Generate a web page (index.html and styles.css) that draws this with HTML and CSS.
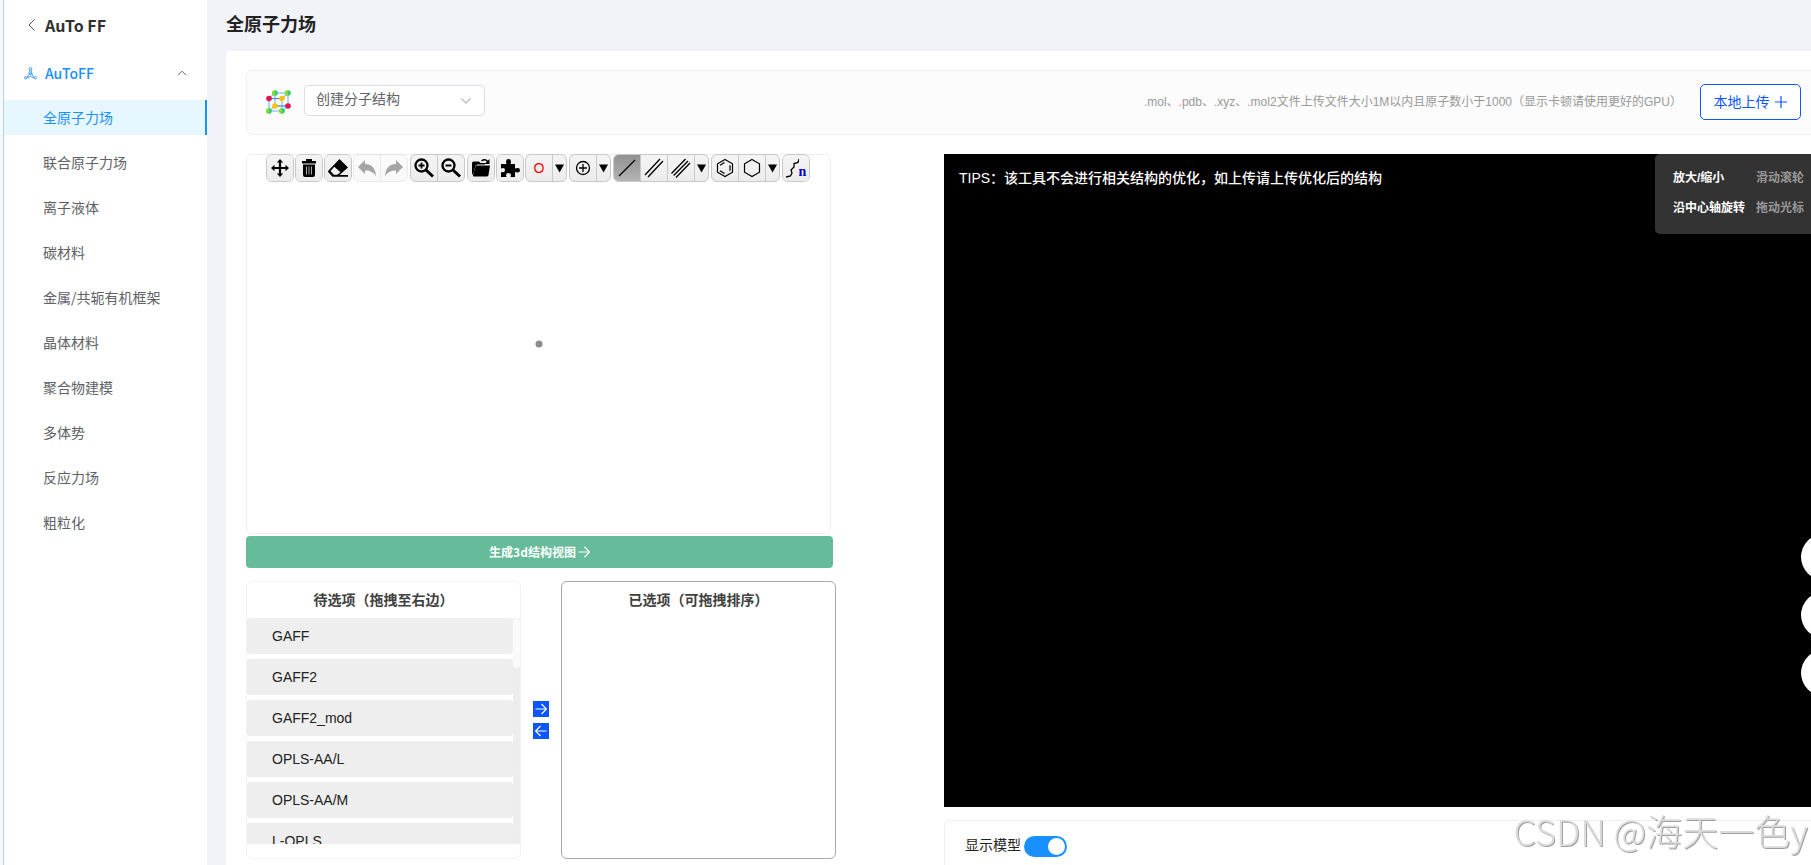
FILE: index.html
```html
<!DOCTYPE html>
<html lang="zh-CN">
<head>
<meta charset="utf-8">
<title>AuTo FF</title>
<link rel="stylesheet" href="styles.css">
</head>
<body>
<div class="app">
  <aside class="sidebar">
    <a class="back" href="#">
      <svg width="8" height="14" viewBox="0 0 8 14" fill="none" stroke="#555"><path d="M6.5 1.5 1 7l5.500 5.500"/></svg>
      <span>AuTo FF</span>
    </a>
    <button class="group-title" type="button">
      <svg width="13" height="13" viewBox="0 0 13 13" fill="none" stroke="#3c9bff"><circle cx="6.500" cy="2" r="1.400"/><circle cx="1.700" cy="10.700" r="1.200"/><circle cx="11.300" cy="10.700" r="1.200"/><circle cx="6.500" cy="7" r="1"/><path d="M6 3.300 4.500 8.500 2.800 10M7 3.300l1.500 5.200L10.200 10M3 11q3.500-3 7 0"/></svg>
      <span>AuToFF</span>
      <svg class="caret" width="10" height="6" viewBox="0 0 10 6" fill="none" stroke="#666"><path d="M1 5.200 5 1.200l4 4"/></svg>
    </button>
    <nav class="menu">
      <a class="item active" href="#">全原子力场</a>
      <a class="item" href="#">联合原子力场</a>
      <a class="item" href="#">离子液体</a>
      <a class="item" href="#">碳材料</a>
      <a class="item" href="#">金属/共轭有机框架</a>
      <a class="item" href="#">晶体材料</a>
      <a class="item" href="#">聚合物建模</a>
      <a class="item" href="#">多体势</a>
      <a class="item" href="#">反应力场</a>
      <a class="item" href="#">粗粒化</a>
    </nav>
  </aside>

  <main class="main">
    <h1 class="page-title">全原子力场</h1>
    <div class="card">
      <section class="source">
        <svg class="cube" width="26" height="26" viewBox="0 0 26 26">
          <g fill="none" stroke="#93c9f5" stroke-width="1.500"><path d="M9 4h13v13H9zM3 9.500h13V22H3zM3 9.500 9 4M16 9.500 22 4M3 22l6-5M16 22l6-5"/></g>
          <path d="M3 9.500h13M9 17h13" stroke="#3f8ff0" stroke-width="1.200"/>
          <g fill="#35cf6a"><circle cx="9" cy="4" r="2.800"/><circle cx="22" cy="4" r="2.800"/><circle cx="3" cy="22" r="2.800"/><circle cx="16" cy="22" r="2.800"/></g>
          <g fill="#8edb2c"><path d="M9 1.200a2.800 2.800 0 0 0 0 5.600zM22 1.200a2.800 2.800 0 0 0 0 5.600zM3 19.200a2.800 2.800 0 0 0 0 5.600zM16 19.200a2.800 2.800 0 0 0 0 5.600z"/></g>
          <g fill="#e0154f"><circle cx="3" cy="9.500" r="2.800"/><circle cx="22" cy="17" r="2.800"/></g>
          <g fill="#ffc107"><circle cx="16" cy="9.500" r="2.800"/><circle cx="9" cy="17" r="2.800"/></g>
        </svg>
        <div class="select-wrap">
          <select class="select" aria-label="结构来源"><option>创建分子结构</option></select>
          <svg class="select-arrow" width="12" height="8" viewBox="0 0 12 8" fill="none" stroke="#b4b8c0" stroke-width="1.200"><path d="m1.500 1.500 4.500 4.700 4.500-4.700"/></svg>
        </div>
        <p class="hint">.mol、.pdb、.xyz、.mol2文件上传文件大小1M以内且原子数小于1000（显示卡顿请使用更好的GPU）</p>
        <button class="upload" type="button">本地上传
          <svg width="14" height="14" viewBox="0 0 14 14" stroke="#0d55ff" stroke-width="1.200"><path d="M1 7h12M7 1v12"/></svg>
        </button>
      </section>

      <div class="work">
        <section class="left">
          <div class="editor">
            <svg class="atom" width="8" height="8" viewBox="0 0 8 8"><circle cx="4" cy="4" r="3.500" fill="#8c8c8c"/></svg>
            <div class="toolbar">
              <div class="tools"><button type="button" aria-label="移动"><svg viewBox="0 0 20 20"><path d="M10 1 6.800 4.500h2.100v4.400H4.500V6.800L1 10l3.500 3.200v-2.100h4.400v4.400H6.800L10 19l3.200-3.500h-2.100v-4.400h4.400v2.100L19 10l-3.500-3.200v2.100h-4.400V4.500h2.100z"/></svg></button></div>
              <div class="tools"><button type="button" aria-label="清空"><svg viewBox="0 0 20 20"><path d="M7 1h6v2h4v2.500H3V3h4zM4 6.500h12V17q0 2-2 2H6q-2 0-2-2z"/><path d="M7.500 8.500v8M10 8.500v8M12.500 8.500v8" stroke="#aaa"/></svg></button></div>
              <div class="tools"><button type="button" aria-label="擦除"><svg viewBox="0 0 20 20"><path d="M11.500 1 20 9.500 11.500 17H20v1.800H4.500L.5 14.500q-.8-1 0-2zM6.300 8.800 2.500 13l3.400 3.800h3.300l3.300-2.600z" fill-rule="evenodd"/></svg></button></div>
              <div class="tools off"><button type="button" aria-label="撤销" disabled><svg viewBox="0 0 20 20"><path d="M8 2v4q10 0 11 12-4-6-11-5.500V16L1 9z"/></svg></button><button type="button" aria-label="重做" disabled><svg viewBox="0 0 20 20"><path d="M12 2v4Q2 6 1 18q4-6 11-5.500V16l7-7z"/></svg></button></div>
              <div class="tools"><button type="button" aria-label="放大"><svg viewBox="0 0 20 20"><circle cx="7.500" cy="7.500" r="6" fill="none" stroke="#000" stroke-width="2.300"/><path d="M4.500 7.500h6M7.500 4.500v6" stroke="#000" stroke-width="1.800"/><path d="m12 12 7 6.500" stroke="#000" stroke-width="3"/></svg></button><button type="button" aria-label="缩小"><svg viewBox="0 0 20 20"><circle cx="7.500" cy="7.500" r="6" fill="none" stroke="#000" stroke-width="2.300"/><path d="M4.500 7.500h6" stroke="#000" stroke-width="1.800"/><path d="m12 12 7 6.500" stroke="#000" stroke-width="3"/></svg></button></div>
              <div class="tools"><button type="button" aria-label="打开"><svg viewBox="0 0 20 20"><path d="M1 5q0-1.500 1.500-1.500H8L9.500 5H14v1.500H6.500Q5 6.500 4.500 8L2.500 15 1 17z"/><path d="M5.800 7.500H19L17.500 17q-.2 1.500-2 1.500H3q-1.500 0-1-1.500L4.500 8.500q.3-1 1.300-1z"/><path d="M10.500 3q3.500-3 6.500 1" fill="none" stroke="#000" stroke-width="1.500"/><path d="M18.500 1v5h-5z"/></svg></button></div>
              <div class="tools"><button type="button" aria-label="插件"><svg viewBox="0 0 20 20"><path d="M1 6h5.500Q5 1 8.500 1T10.500 6H15v4.500q5-1.500 5 1.700T15 14v5h-4.500q1.500-4-2-4t-2 4H1v-5q4 1 4-2t-4-1.500z"/></svg></button></div>
              <div class="tools"><button class="element" type="button">O</button><button class="drop" type="button" aria-label="更多元素"><svg viewBox="0 0 8 8"><path d="M0 .5h8L4 7.500z"/></svg></button></div>
              <div class="tools"><button type="button" aria-label="正电荷"><svg viewBox="0 0 20 20" fill="none" stroke="#000" stroke-width="1.300"><circle cx="10" cy="10" r="6.500"/><path d="M10 6v8M6 10h8"/></svg></button><button class="drop" type="button" aria-label="更多电荷"><svg viewBox="0 0 8 8"><path d="M0 .5h8L4 7.500z"/></svg></button></div>
              <div class="tools"><button class="on" type="button" aria-label="单键"><svg viewBox="0 0 20 20" stroke="#000" stroke-width="1.300"><path d="M2 18 18 2"/></svg></button><button type="button" aria-label="双键"><svg viewBox="0 0 20 20" stroke="#000" stroke-width="1.300"><path d="M1 17 16 1M4 19 19 3"/></svg></button><button type="button" aria-label="三键"><svg viewBox="0 0 20 20" stroke="#000" stroke-width="1.300"><path d="M.5 15.500 14.500 1M2.700 17.500 17 3M5 19.500 19 5"/></svg></button><button class="drop" type="button" aria-label="更多键"><svg viewBox="0 0 8 8"><path d="M0 .5h8L4 7.500z"/></svg></button></div>
              <div class="tools"><button type="button" aria-label="苯环"><svg viewBox="0 0 20 20" fill="none" stroke="#000" stroke-width="1.200"><path d="M10 1.500 17.500 5.800v8.400L10 18.500 2.500 14.200V5.800zM9.500 4.500 5 7.200M15 7.200v5.600M9.500 15.500 5 12.800"/></svg></button><button type="button" aria-label="环己烷"><svg viewBox="0 0 20 20" fill="none" stroke="#000" stroke-width="1.200"><path d="M10 1.500 17.500 5.800v8.400L10 18.500 2.500 14.200V5.800z"/></svg></button><button class="drop" type="button" aria-label="更多环"><svg viewBox="0 0 8 8"><path d="M0 .5h8L4 7.500z"/></svg></button></div>
              <div class="tools"><button class="chain" type="button" aria-label="链"><svg viewBox="0 0 13 20" fill="none" stroke="#000" stroke-width="1.300"><path d="m0 19 4.500-1L6 15l-1-3 3-3V5.500l4-1L13 1"/></svg><b>n</b></button></div>
            </div>
          </div>
          <button class="generate" type="button">生成3d结构视图
            <svg width="12" height="12" viewBox="0 0 12 12" fill="none" stroke="#fff" stroke-width="1.200"><path d="M.5 6h10.500M6.500 1l5 5-5 5"/></svg>
          </button>
          <div class="transfer">
            <div class="box">
              <h2>待选项（拖拽至右边）</h2>
              <div class="scroll">
                <ul class="list">
                  <li>GAFF</li><li>GAFF2</li><li>GAFF2_mod</li><li>OPLS-AA/L</li><li>OPLS-AA/M</li><li>L-OPLS</li>
                </ul>
                <div class="track"><div class="thumb"></div></div>
              </div>
            </div>
            <div class="moves">
              <button type="button" aria-label="移到右边"><svg width="12" height="12" viewBox="0 0 12 12" fill="none" stroke="#fff" stroke-width="1.200"><path d="M.5 6h10.500M6.500 1l5 5-5 5"/></svg></button>
              <button type="button" aria-label="移到左边"><svg width="12" height="12" viewBox="0 0 12 12" fill="none" stroke="#fff" stroke-width="1.200"><path d="M11.500 6H1M5.500 1l-5 5 5 5"/></svg></button>
            </div>
            <div class="box chosen">
              <h2>已选项（可拖拽排序）</h2>
            </div>
          </div>
        </section>

        <section class="right">
          <div class="viewer">
            <p class="tips">TIPS：该工具不会进行相关结构的优化，如上传请上传优化后的结构</p>
            <dl class="help">
              <dt>放大/缩小</dt><dd>滑动滚轮</dd>
              <dt>沿中心轴旋转</dt><dd>拖动光标</dd>
            </dl>
            <div class="rounds">
              <button type="button" aria-label="视图操作一"></button>
              <button type="button" aria-label="视图操作二"></button>
              <button type="button" aria-label="视图操作三"></button>
            </div>
          </div>
          <div class="options">
            <label for="show-model">显示模型</label>
            <input class="switch" id="show-model" type="checkbox" checked>
          </div>
        </section>
      </div>
    </div>
  </main>
</div>
<div class="watermark">CSDN @海天一色y</div>
</body>
</html>
```
FILE: styles.css
```css
* { box-sizing: border-box; }

body {
  margin: 0;
  height: 100vh;
  overflow: hidden;
  background: #f2f3f8;
  color: #222;
  font: 14px/20px "Liberation Sans", "Noto Sans CJK SC", sans-serif;
}

h1, h2, p, ul, dl, dd { margin: 0; padding: 0; }
button { margin: 0; padding: 0; border: 0; background: none; font: inherit; color: inherit; }
a { color: inherit; text-decoration: none; }
svg { display: block; flex: none; }

.app { display: flex; height: 100vh; overflow: hidden; border-left: 3px solid #f0faff; }

/* Sidebar */
.sidebar {
  flex: none;
  width: 204px;
  background: #fff;
  border-left: 1px solid #c3ced2;
  font-family: "Noto Sans CJK SC", sans-serif;
}
.back {
  display: flex;
  align-items: center;
  gap: 9px;
  height: 50px;
  padding-left: 24px;
  font-size: 16px;
  font-weight: 700;
  color: #303030;
}
.group-title {
  display: flex;
  align-items: center;
  gap: 8px;
  width: 100%;
  height: 46px;
  padding: 0 20px;
  font-weight: 500;
  color: #1890ff;
}
.caret { margin-left: auto; }
.menu { display: flex; flex-direction: column; gap: 10px; padding-top: 4px; }
.item { height: 35px; padding-left: 39px; line-height: 35px; color: #606266; }
.item.active { background: #e6f7ff; border-right: 2px solid #1890ff; color: #1890ff; }

/* Page */
.main { flex: 1; min-width: 0; margin-right: -30px; padding-left: 19px; }
.page-title { height: 51px; font-size: 18px; line-height: 51px; font-weight: 700; color: #222; }
.card { min-height: 100vh; padding: 19px 20px; background: #fff; }

.source {
  display: flex;
  align-items: center;
  height: 65px;
  padding: 0 19px 2px;
  background: #fcfcfc;
  border: 1px solid #efefef;
  border-radius: 6px;
}
.select-wrap { position: relative; width: 181px; margin: 0 0 2px 12px; }
.select {
  appearance: none;
  display: block;
  width: 100%;
  height: 31px;
  padding: 0 11px 3px;
  border: 1px solid #dcdfe6;
  border-radius: 4px;
  background: #fff;
  color: #606266;
  font: inherit;
}
.select-arrow { position: absolute; right: 13px; top: 12px; pointer-events: none; }
.hint { margin-left: auto; font-size: 12px; color: #999; white-space: nowrap; }
.upload {
  display: flex;
  align-items: center;
  justify-content: center;
  gap: 4px;
  width: 101px;
  height: 36px;
  margin-left: 18px;
  border: 1px solid #0d55ff;
  border-radius: 5px;
  background: #fff;
  color: #0d55ff;
}

.work { display: grid; grid-template-columns: 590fr 877fr; gap: 108px; padding-top: 19px; }

/* Structure editor */
.left { min-width: 0; }
.editor {
  display: grid;
  height: 380px;
  margin-right: 5px;
  border: 1px solid #efefef;
  border-radius: 6px;
}
.atom { grid-area: 1 / 1; place-self: center; }
.toolbar { grid-area: 1 / 1; display: flex; align-items: flex-start; gap: 2px; margin: -1px 0 0 19px; }
.tools {
  display: flex;
  gap: 1px;
  height: 28px;
  border: 1px solid #c8c8c8;
  border-radius: 6px;
  background: #c8c8c8;
  overflow: hidden;
}
.tools:nth-child(-n+3), .tools:nth-child(6), .tools:nth-child(7) { margin-right: -1px; }
.tools.off { opacity: .35; }
.tools button {
  display: flex;
  align-items: center;
  justify-content: center;
  width: 26px;
  background: linear-gradient(#f4f4f4, #ececec);
}
.tools button svg { width: 20px; height: 20px; }
.tools .on { background: linear-gradient(#929292, #b4b4b4); }
.tools .drop { width: 13px; }
.tools .drop svg { width: 9px; height: 9px; }
.tools .element { font: 14px/20px "Liberation Sans", sans-serif; color: #f00; }
.tools .chain svg { width: 13px; }
.chain b { align-self: flex-end; font: 700 14px/18px "Liberation Serif", serif; color: #00c; }

.generate {
  display: flex;
  align-items: center;
  justify-content: center;
  gap: 2px;
  width: calc(100% - 3px);
  height: 32px;
  margin-top: 2px;
  border-radius: 4px;
  background: #66bb9a;
  color: #fff;
  font: 700 12px/20px "Noto Sans CJK SC", sans-serif;
}

/* Transfer lists */
.transfer { display: grid; grid-template-columns: 1fr 40px 1fr; height: 278px; margin-top: 13px; }
.box { border: 1px solid #f2f2f2; border-radius: 6px; }
.chosen { border-color: #a8a8a8; }
.box h2 { height: 36px; font-size: 14px; line-height: 36px; text-align: center; color: #404040; }
.scroll { display: flex; height: 226px; overflow: hidden; }
.list { flex: 1; list-style: none; }
.list li {
  height: 36px;
  margin-bottom: 5px;
  padding-left: 25px;
  border-radius: 3px;
  background: #eee;
  line-height: 36px;
}
.track { width: 7px; background: #ededed; }
.thumb { height: 50px; border-radius: 4px; background: #fafafa; }
.moves { display: flex; flex-direction: column; align-items: center; justify-content: center; gap: 6px; }
.moves button { display: grid; place-items: center; width: 16px; height: 16px; background: #0d55ff; }

/* 3D viewer */
.right { min-width: 0; }
.viewer { position: relative; height: 653px; padding: 14px 15px; background: #000; color: #fff; }
.tips { font-weight: 500; }
.help {
  position: absolute;
  top: 0;
  right: 0;
  display: grid;
  grid-template-columns: 72px 1fr;
  grid-auto-rows: 20px;
  gap: 10px 11px;
  width: 166px;
  height: 80px;
  padding: 14px 0 0 18px;
  border-radius: 5px;
  background: #333;
  font-size: 12px;
  font-weight: 700;
  white-space: nowrap;
}
.help dd { color: #999; }
.rounds { position: absolute; right: -26px; bottom: 111px; display: grid; gap: 12px; }
.rounds button { width: 46px; height: 46px; border-radius: 50%; background: #fff; }

.options {
  display: flex;
  gap: 3px;
  height: 80px;
  margin-top: 13px;
  padding: 14px 20px;
  border: 1px solid #f0f0f0;
  border-radius: 6px;
}
.switch {
  appearance: none;
  width: 43px;
  height: 21px;
  margin: 1px 0 0;
  padding: 2px;
  border-radius: 11px;
  background: #1890ff;
}
.switch::before {
  content: "";
  display: block;
  width: 17px;
  height: 17px;
  margin-left: auto;
  border-radius: 50%;
  background: #fff;
}

.watermark {
  position: fixed;
  right: 3px;
  bottom: 11px;
  font: 300 36px/48px "Noto Sans CJK SC", sans-serif;
  color: #dcdcdc;
  text-shadow: 1px 1px 0 #a0a0a0;
}
```
